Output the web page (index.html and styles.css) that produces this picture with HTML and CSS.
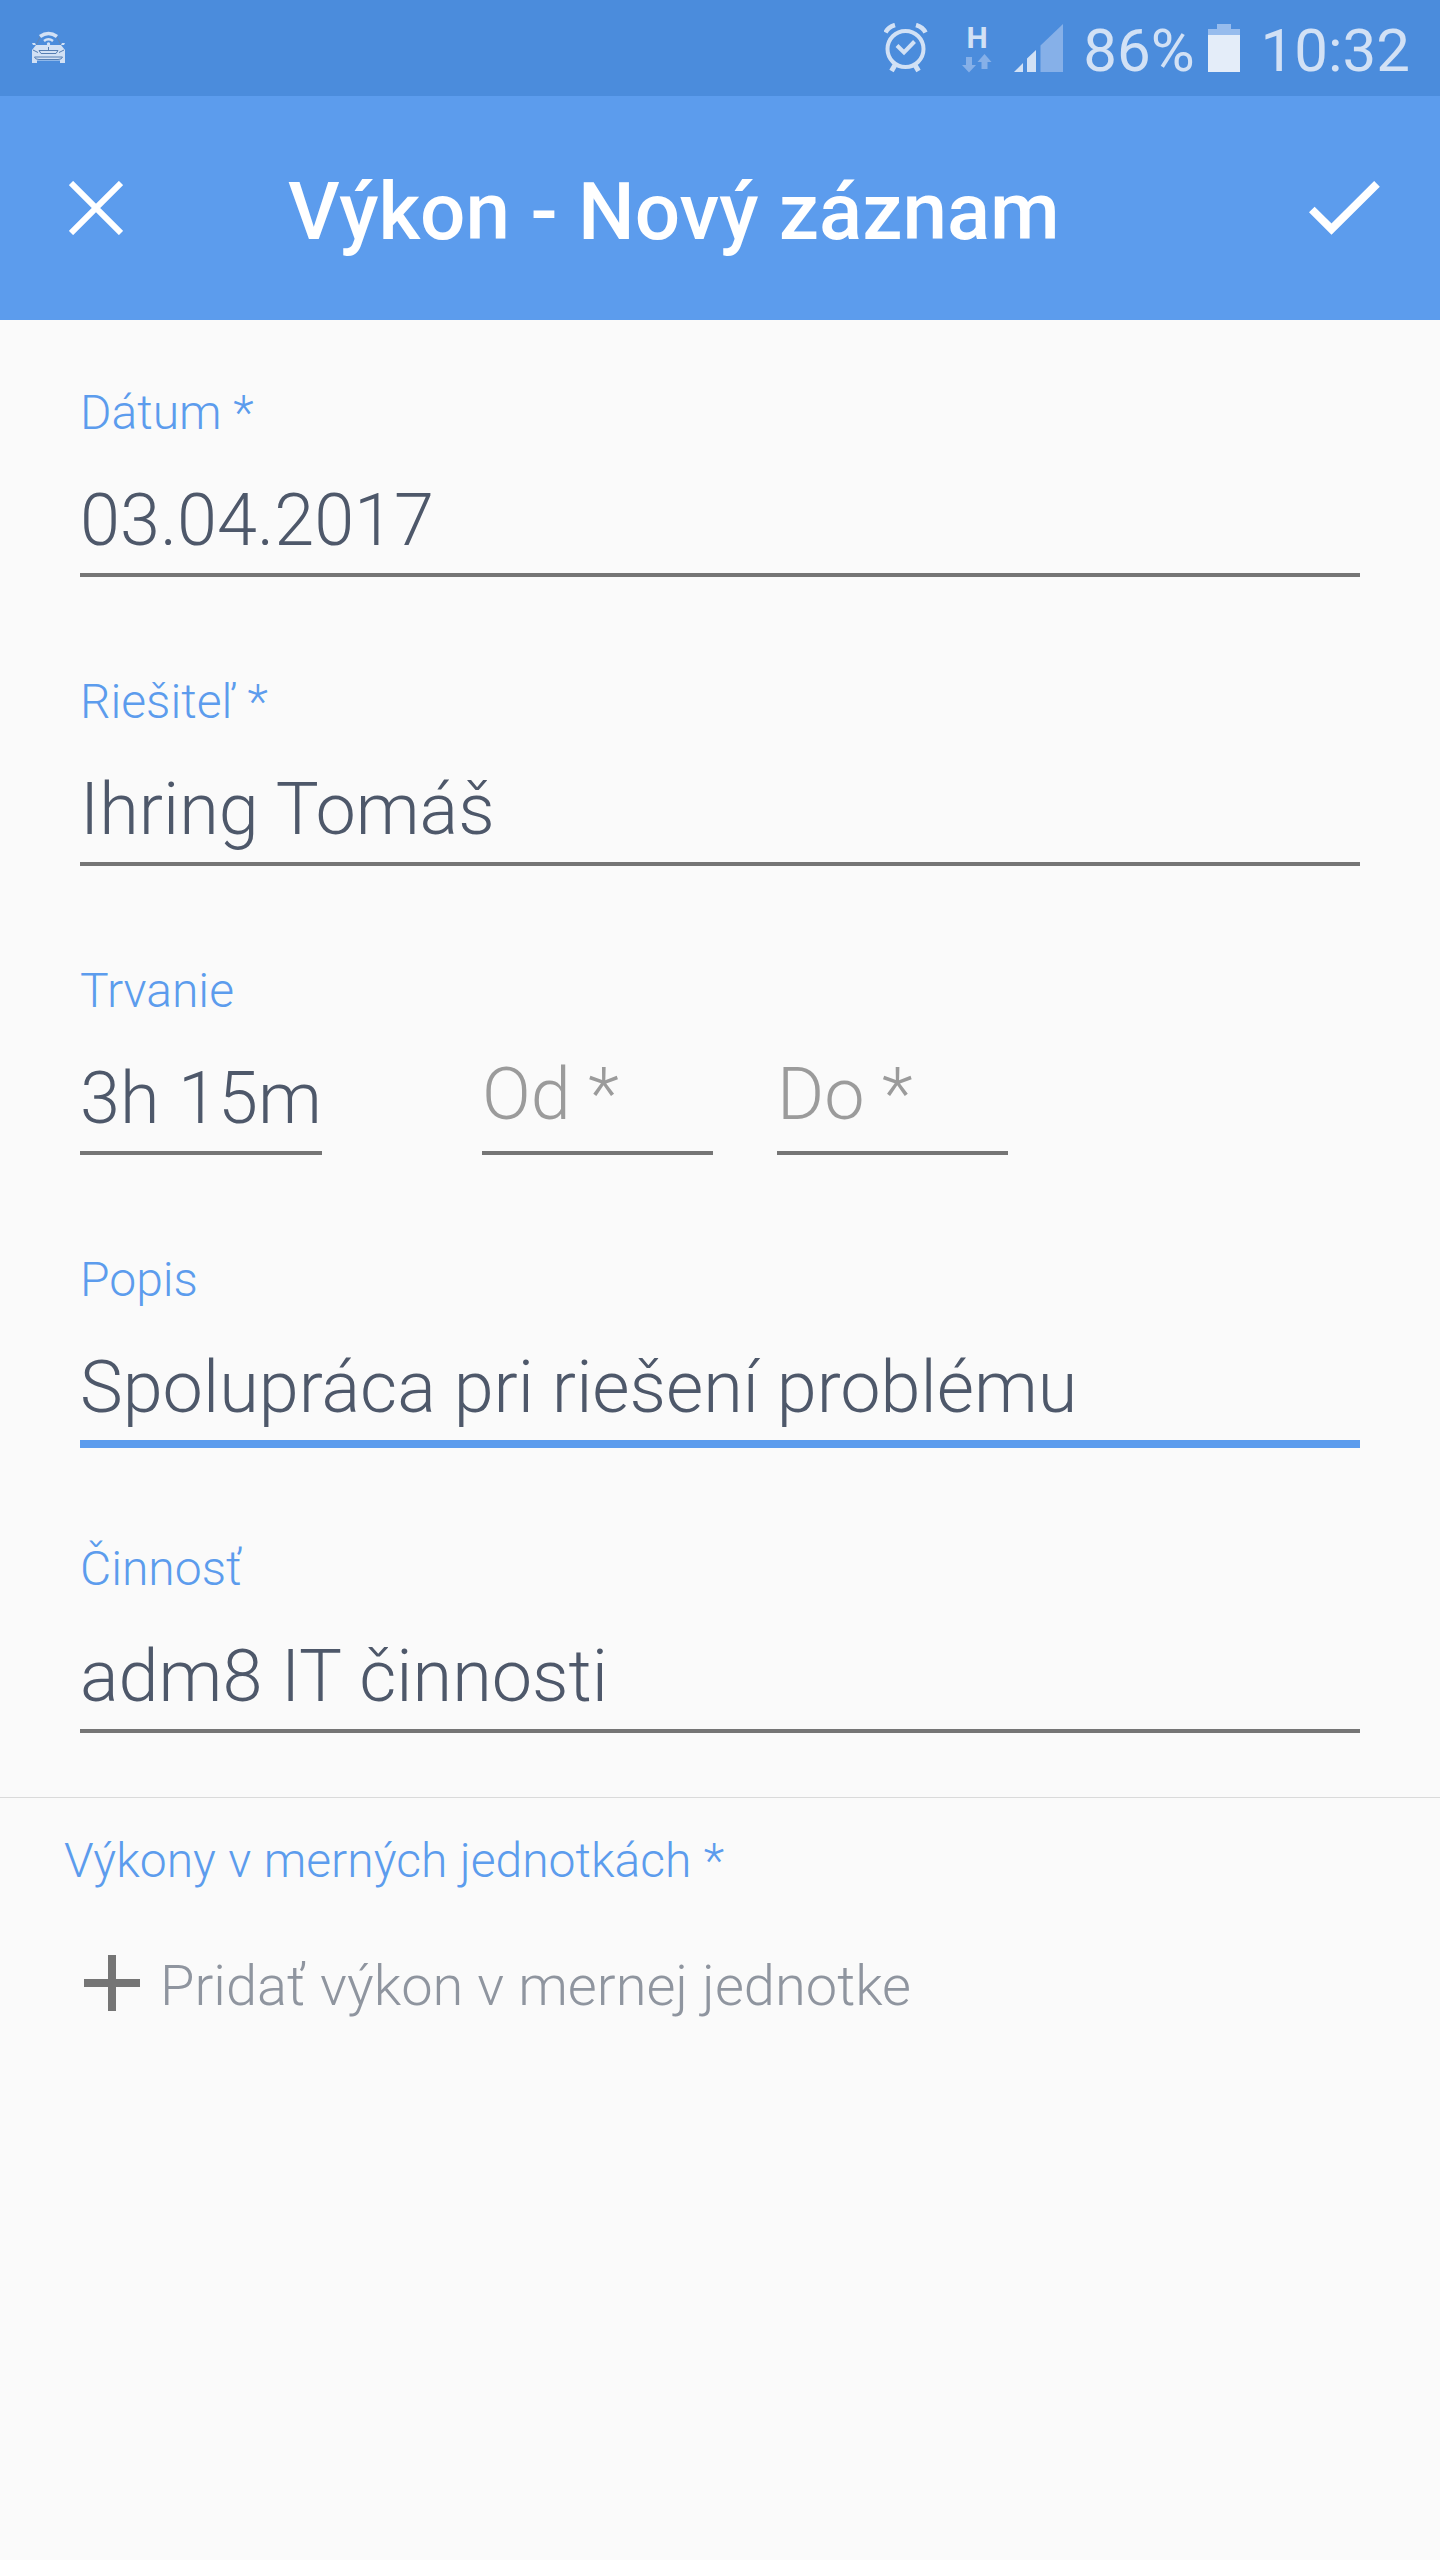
FILE: index.html
```html
<!DOCTYPE html>
<html lang="sk">
<head>
  <meta charset="UTF-8">
  <meta name="viewport" content="width=device-width, initial-scale=1.0">
  <title>Výkon - Nový záznam</title>
  <link rel="stylesheet" href="styles.css">
</head>
<body>
  <div class="status-bar">
    <svg class="icon-car" width="36" height="34" viewBox="0 0 36 34">
      <g fill="none" stroke="#d2e1f5">
        <path d="M9 5.500Q17.500 -0.500 26 5.500" stroke-width="3.500" />
        <path d="M13 10Q17.500 6.500 22 10" stroke-width="2.500" />
        <path d="M9 6L5 14M26 6L30 14" stroke="#5f86b8" stroke-width="1.200" />
      </g>
      <g fill="#d2e1f5">
        <path d="M5 14H30L34 19V32H29V29.500H6V32H1V19Z" />
        <path d="M1 12H4L5 14H2ZM31 12H34L33 14H30Z" />
        <circle cx="17.500" cy="13" r="1.700" />
      </g>
      <g fill="none" stroke="#557eb3" stroke-width="1">
        <path d="M8 19.500H27L25 22.500H10ZM2 19L7 21.500M33 19L28 21.500" />
        <path d="M3.500 26Q4 28.500 8 28.500H27Q31 28.500 31.500 26Z" />
        <path d="M17.500 16V20" />
      </g>
    </svg>
    <div class="status-right">
      <svg class="icon-alarm" width="44" height="50" viewBox="0 0 44 50" fill="none" stroke="#d2e1f5">
        <circle cx="21.500" cy="26" r="18" stroke-width="4" />
        <path d="M13 22.500L20 29.500L30.500 18.500" stroke-width="4" />
        <path d="M1.500 9.500Q4 4 11 2M41.500 9.500Q39 4 32 2" stroke-width="4.500" />
        <path d="M11 42L7.500 48M31 42L34.500 48" stroke-width="5" />
      </svg>
      <div class="network">
        <span class="network-type">H</span>
        <svg width="30" height="19" viewBox="0 0 30 19" fill="#86b0e8">
          <path d="M4 3H10V11H14L7 18.500L0 11H4Z" />
          <path d="M19.500 15V8H15.500L22.500 0L29.500 8H25.500V15Z" />
        </svg>
      </div>
      <svg class="icon-signal" width="49" height="48" viewBox="0 0 49 48" fill="#d2e1f5">
        <path d="M0 48L9 39V48ZM13 48V34.500L22 26V48Z" />
        <path d="M26.500 48V21.500L49 0V48Z" fill="#86b0e8" />
      </svg>
      <span class="battery-text">86%</span>
      <svg class="icon-battery" width="32" height="48" viewBox="0 0 32 48">
        <path d="M9 0H23V5H32V11H0V5H9Z" fill="#97bced" />
        <path d="M0 11H32V48H0Z" fill="#e4edf9" />
      </svg>
      <span class="clock">10:32</span>
    </div>
  </div>

  <header class="app-bar">
    <svg class="icon-close" width="54" height="54" viewBox="0 0 54 54" fill="none" stroke="#fff" stroke-width="6">
      <path d="M2 2L52 52M52 2L2 52" />
    </svg>
    <h1>Výkon - Nový záznam</h1>
    <svg class="icon-check" width="71" height="54" viewBox="0 0 71 54" fill="none" stroke="#fff" stroke-width="8">
      <path d="M2.800 28.500L22.500 48.200L68 2.800" />
    </svg>
  </header>

  <main class="form">
    <div class="field">
      <div class="label">Dátum *</div>
      <div class="value">03.04.2017</div>
    </div>
    <div class="field">
      <div class="label">Riešiteľ *</div>
      <div class="value">Ihring Tomáš</div>
    </div>
    <div class="field">
      <div class="label">Trvanie</div>
      <div class="row">
        <div class="value duration">3h 15m</div>
        <div class="value time">Od *</div>
        <div class="value time">Do *</div>
      </div>
    </div>
    <div class="field">
      <div class="label">Popis</div>
      <div class="value active">Spolupráca pri riešení problému</div>
    </div>
    <div class="field">
      <div class="label">Činnosť</div>
      <div class="value">adm8 IT činnosti</div>
    </div>
  </main>

  <section class="units">
    <div class="label">Výkony v merných jednotkách *</div>
    <div class="add">
      <svg width="56" height="56" viewBox="0 0 56 56" fill="#757575">
        <path d="M24 0H32V24H56V32H32V56H24V32H0V24H24Z" />
      </svg>
      <span>Pridať výkon v mernej jednotke</span>
    </div>
  </section>
</body>
</html>
```
FILE: styles.css
```css
* {
  box-sizing: border-box;
}
body {
  margin: 0;
  min-height: 2560px;
  background-color: #fafafa;
  font-family: Roboto, sans-serif;
  font-weight: 300;
}
svg {
  display: block;
  flex: none;
}
.status-bar {
  display: flex;
  justify-content: space-between;
  align-items: flex-start;
  height: 96px;
  padding: 0 30px 0 31px;
  background-color: #4b8cdc;
  color: #d2e1f5;
  font-size: 60px;
  font-weight: 400;
  line-height: 70px;
}
.icon-car {
  margin-top: 31px;
}
.status-right {
  display: flex;
  align-items: flex-start;
}
.icon-alarm {
  margin: 23px 34px 0 0;
}
.network {
  width: 30px;
  margin: 23px 22px 0 0;
}
.network-type {
  display: block;
  height: 31px;
  font-size: 30px;
  font-weight: 700;
  line-height: 30px;
  text-align: center;
}
.icon-signal {
  margin: 24px 20px 0 0;
}
.battery-text,
.clock {
  margin-top: 16px;
}
.icon-battery {
  margin: 24px 21px 0 13px;
}
.app-bar {
  display: flex;
  align-items: center;
  height: 224px;
  padding: 0 60px 0 69px;
  background-color: #5c9ced;
  color: #fff;
}
.app-bar h1 {
  flex: 1;
  margin: 7px 0 0 165px;
  font-size: 80px;
  font-weight: 500;
  line-height: 96px;
  word-spacing: 0.5px;
}
.form {
  padding: 65px 80px 0;
  border-bottom: 1px solid #dadada;
}
.field {
  height: 289px;
}
.field:last-child {
  height: 256px;
}
.label {
  margin-bottom: 38px;
  color: #5c9ced;
  font-size: 48px;
  line-height: 56px;
}
.value {
  height: 98px;
  border-bottom: 4px solid #757575;
  color: #4e586a;
  font-size: 72px;
  line-height: 84px;
  white-space: nowrap;
  word-spacing: 1px;
}
.value.active {
  height: 102px;
  border-bottom: 8px solid #5c9ced;
  word-spacing: 0.3px;
}
.row {
  display: flex;
}
.duration {
  width: 242px;
  margin-right: 160px;
}
.time {
  width: 231px;
  margin-right: 64px;
  color: #9b9b9b;
  line-height: 76px;
  word-spacing: 0;
}
.units {
  padding: 35px 64px 0;
}
.units .label {
  margin-bottom: 57px;
  word-spacing: 0.7px;
}
.add {
  display: flex;
  align-items: flex-start;
  gap: 20px;
  padding-left: 20px;
  color: #8f959f;
  font-size: 56px;
  line-height: 80px;
  word-spacing: 0.3px;
}
.add svg {
  margin-top: 9px;
}
```
